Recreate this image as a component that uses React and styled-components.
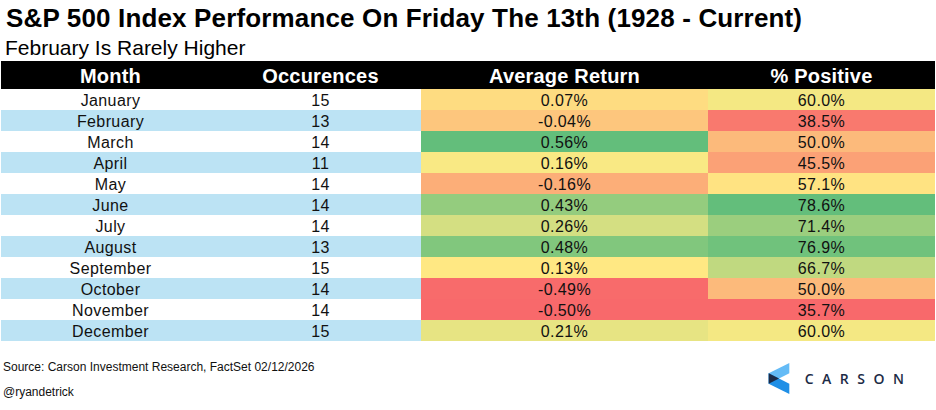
import React from "react";
import styled, { createGlobalStyle } from "styled-components";

const GlobalStyle = createGlobalStyle`
  body {
    margin: 0;
    background: #ffffff;
    font-family: "Liberation Sans", Arial, sans-serif;
  }
`;

const rows = [
  { month: "January", count: 15, avg: 0.07, pos: 60.0 },
  { month: "February", count: 13, avg: -0.04, pos: 38.5 },
  { month: "March", count: 14, avg: 0.56, pos: 50.0 },
  { month: "April", count: 11, avg: 0.16, pos: 45.5 },
  { month: "May", count: 14, avg: -0.16, pos: 57.1 },
  { month: "June", count: 14, avg: 0.43, pos: 78.6 },
  { month: "July", count: 14, avg: 0.26, pos: 71.4 },
  { month: "August", count: 13, avg: 0.48, pos: 76.9 },
  { month: "September", count: 15, avg: 0.13, pos: 66.7 },
  { month: "October", count: 14, avg: -0.49, pos: 50.0 },
  { month: "November", count: 14, avg: -0.5, pos: 35.7 },
  { month: "December", count: 15, avg: 0.21, pos: 60.0 },
];

/* excel style red - yellow - green scale */
const RED = [248, 105, 107];
const YELLOW = [255, 235, 132];
const GREEN = [99, 190, 123];

function mix(a, b, t) {
  return a.map((v, i) => Math.round(v + (b[i] - v) * t));
}

function scale(values) {
  const sorted = [...values].sort((a, b) => a - b);
  const min = sorted[0];
  const max = sorted[sorted.length - 1];
  const n = sorted.length;
  const mid = n % 2 ? sorted[(n - 1) / 2] : (sorted[n / 2 - 1] + sorted[n / 2]) / 2;

  return (v) => {
    const c = v <= mid
      ? mix(RED, YELLOW, (v - min) / (mid - min))
      : mix(YELLOW, GREEN, (v - mid) / (max - mid));
    return `rgb(${c[0]}, ${c[1]}, ${c[2]})`;
  };
}

const avgColor = scale(rows.map((r) => r.avg));
const posColor = scale(rows.map((r) => r.pos));

export default function App() {
  return (
    <>
      <GlobalStyle />
      <Page>
        <Title>S&amp;P 500 Index Performance On Friday The 13th (1928 - Current)</Title>
        <Subtitle>February Is Rarely Higher</Subtitle>

        <Table>
          <HeadCell>Month</HeadCell>
          <HeadCell>Occurences</HeadCell>
          <HeadCell>Average Return</HeadCell>
          <HeadCell>% Positive</HeadCell>

          {rows.map((r, i) => (
            <React.Fragment key={r.month}>
              <Cell $striped={i % 2 === 1}>{r.month}</Cell>
              <Cell $striped={i % 2 === 1}>{r.count}</Cell>
              <Cell $bg={avgColor(r.avg)}>{r.avg.toFixed(2)}%</Cell>
              <Cell $bg={posColor(r.pos)}>{r.pos.toFixed(1)}%</Cell>
            </React.Fragment>
          ))}
        </Table>

        <Footer>
          <Notes>
            <Note>Source: Carson Investment Research, FactSet 02/12/2026</Note>
            <Note>@ryandetrick</Note>
          </Notes>

          <Logo>
            <svg width="22" height="31" viewBox="0 0 22 33">
              <polygon points="0,11 22,0 22,11 0,22" fill="#64bbf6" />
              <polygon points="0,11 22,22 22,33 0,22" fill="#1f8fe6" />
              <polygon points="0,11 11,16.5 0,22" fill="#1b2b48" />
            </svg>
            <LogoText>CARSON</LogoText>
          </Logo>
        </Footer>
      </Page>
    </>
  );
}

const Page = styled.div`
  width: 936px;
  height: 410px;
  padding-top: 3px;
  box-sizing: border-box;
  overflow: hidden;
  color: #000;
`;

const Title = styled.h1`
  margin: 0 0 3px 6px;
  font-size: 26px;
  line-height: 30px;
  font-weight: bold;
  letter-spacing: 0.15px;
  white-space: nowrap;
`;

const Subtitle = styled.div`
  margin: 0 0 1px 5px;
  font-size: 21px;
  line-height: 24px;
`;

const Table = styled.div`
  display: grid;
  grid-template-columns: 219px 201px 287px 227px;
  grid-template-rows: 28px;
  grid-auto-rows: 21px;
  margin-left: 1px;
  width: 934px;
`;

const HeadCell = styled.div`
  background: #000;
  color: #fff;
  font-size: 20px;
  font-weight: bold;
  line-height: 28px;
  padding-top: 1px;
  box-sizing: border-box;
  text-align: center;
  letter-spacing: 0.2px;
`;

const Cell = styled.div`
  background: ${({ $bg, $striped }) => $bg || ($striped ? "#bce3f4" : "#ffffff")};
  color: #111;
  font-size: 16px;
  line-height: 19px;
  padding-top: 2px;
  box-sizing: border-box;
  text-align: center;
  letter-spacing: 0.4px;
`;

const Footer = styled.div`
  display: flex;
  justify-content: space-between;
  align-items: flex-start;
  margin-top: 19px;
  padding: 0 31px 0 3px;
`;

const Notes = styled.div`
  display: flex;
  flex-direction: column;
  gap: 11px;
`;

const Note = styled.div`
  font-size: 12px;
  line-height: 14px;
  color: #111;
`;

const Logo = styled.div`
  display: flex;
  align-items: center;
  gap: 15px;
  margin-top: 3px;
  margin-right: 1px;
`;

const LogoText = styled.span`
  font-family: "Open Sans", "Liberation Sans", sans-serif;
  font-weight: 600;
  font-size: 14px;
  letter-spacing: 8.5px;
  margin-right: -8.5px;
  color: #1c2b46;
`;
